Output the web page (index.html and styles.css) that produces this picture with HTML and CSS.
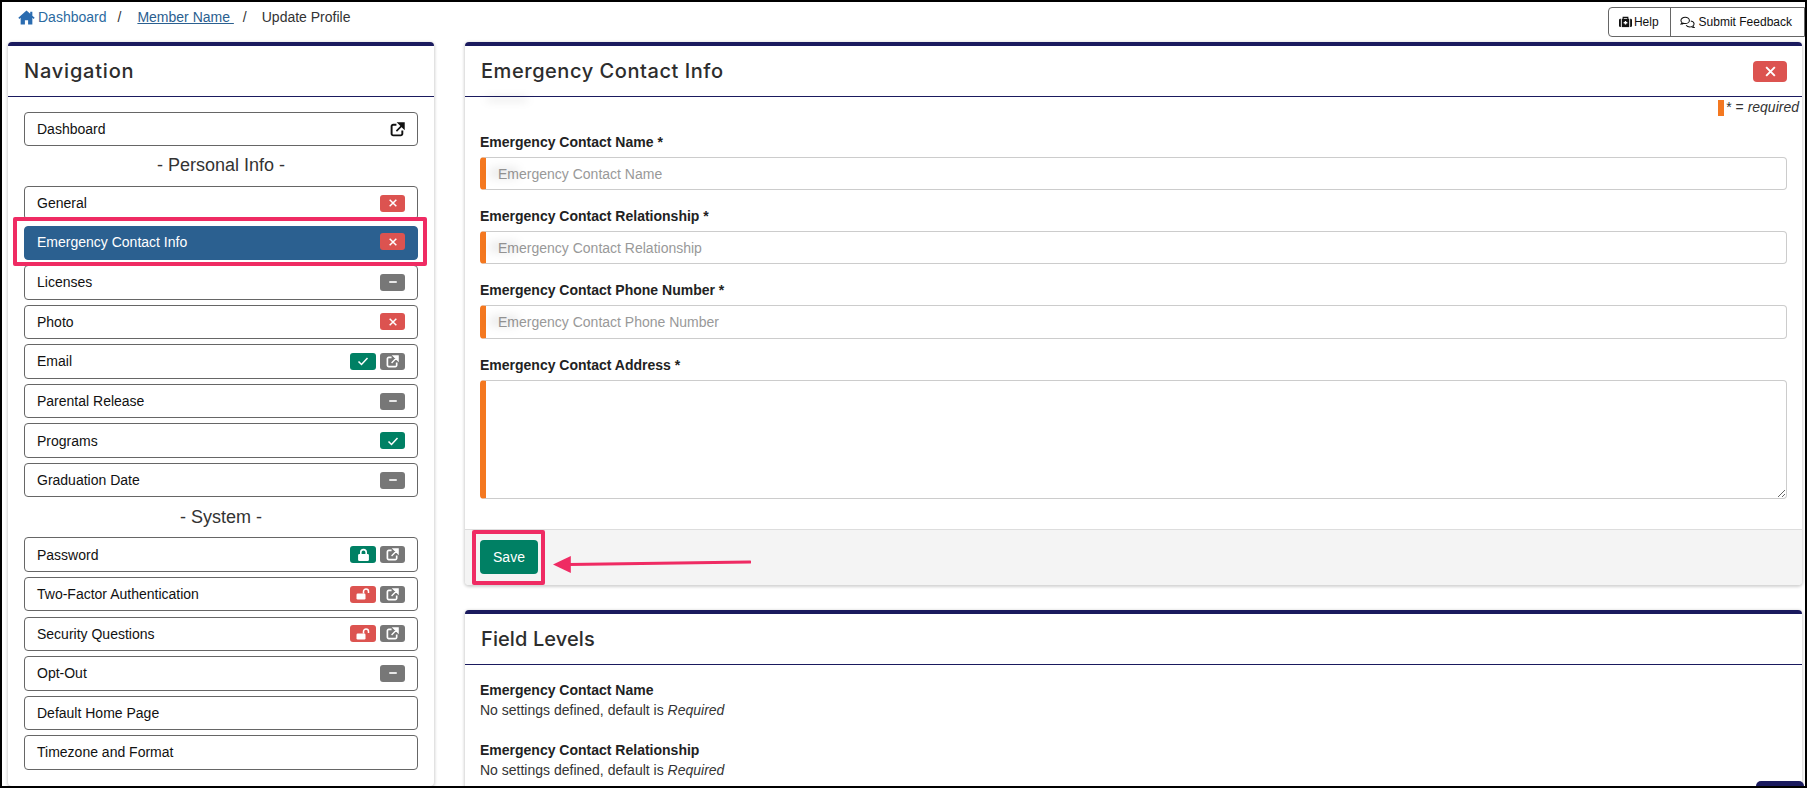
FILE: index.html
```html
<!DOCTYPE html>
<html lang="en">
<head>
<meta charset="utf-8">
<title>Update Profile</title>
<link rel="stylesheet" href="styles.css">
</head>
<body>
<svg class="defs" width="0" height="0" aria-hidden="true">
  <symbol id="i-x" viewBox="0 0 12 12"><path d="M2 2l8 8M10 2l-8 8" fill="none" stroke="currentColor" stroke-width="1.8"/></symbol>
  <symbol id="i-minus" viewBox="0 0 12 12"><path d="M1.5 6h9" fill="none" stroke="currentColor" stroke-width="2"/></symbol>
  <symbol id="i-check" viewBox="0 0 12 12"><path d="M1.5 6.500l3 3 6-6.500" fill="none" stroke="currentColor" stroke-width="1.5"/></symbol>
  <symbol id="i-ext" viewBox="0 0 14 14"><path d="M6 2.500H3A1.500 1.500 0 0 0 1.500 4v7A1.500 1.500 0 0 0 3 12.500h7A1.500 1.500 0 0 0 11.500 11V8" fill="none" stroke="currentColor" stroke-width="1.800"/><path d="M6 8.500L12 2.500M8 1h5v5z" fill="currentColor" stroke="currentColor" stroke-width="1.500"/></symbol>
  <symbol id="i-lock" viewBox="0 0 12 12"><path d="M3.500 5.500V4a2.500 2.500 0 0 1 5 0v1.500" fill="none" stroke="currentColor" stroke-width="1.500"/><rect x="1" y="5.500" width="10" height="6.500" rx="1.200" fill="currentColor"/></symbol>
  <symbol id="i-unlock" viewBox="0 0 14 12"><path d="M7.500 5.500V3.500a2.500 2.500 0 0 1 5 0V5" fill="none" stroke="currentColor" stroke-width="1.500"/><rect x="0.500" y="5.500" width="9" height="6" rx="1.200" fill="currentColor"/></symbol>
</svg>

<div class="frame">
  <header class="topbar">
    <nav class="crumbs">
      <svg class="home" viewBox="0 0 16 14" aria-hidden="true"><path d="M8 0.500L0.300 7.200l1 1.100L2.500 7.300V13.500h4v-4h3v4h4V7.300l1.200 1 1-1.100-2.200-1.900V1.500h-2v2z" fill="currentColor"/></svg>
      <a class="crumb-home" href="#">Dashboard</a>
      <span class="sep sep-a">/</span>
      <a class="crumb-member" href="#">Member Name&nbsp;</a>
      <span class="sep sep-b">/</span>
      <span class="crumb-current">Update Profile</span>
    </nav>
    <div class="btn-group">
      <a class="tool-btn tool-help" href="#">
        <svg class="tool-icon" viewBox="0 0 14 12" aria-hidden="true"><path d="M0 4a1.500 1.500 0 0 1 1.500-1.500H2v9h-.5A1.500 1.500 0 0 1 0 10zM14 4a1.500 1.500 0 0 0-1.500-1.500H12v9h.5A1.500 1.500 0 0 0 14 10z" fill="currentColor"/><path d="M4.500 3V1h5v2" fill="none" stroke="currentColor" stroke-width="1.200"/><rect x="3" y="2.500" width="8" height="9" fill="currentColor"/><path d="M7 4.800v4M5 6.800h4" stroke="#fff" stroke-width="1.500"/></svg>
        Help
      </a>
      <a class="tool-btn tool-feedback" href="#">
        <svg class="tool-icon tool-icon-wide" viewBox="0 0 16 13" aria-hidden="true"><path d="M5.500 1C3 1 1 2.500 1 4.300c0 .9.500 1.700 1.200 2.300-.1.600-.5 1.100-1 1.500 1 0 1.900-.3 2.500-.8.600.2 1.200.3 1.800.3 2.500 0 4.500-1.500 4.500-3.300S8 1 5.500 1z" fill="none" stroke="currentColor" stroke-width="1.100"/><path d="M11.500 4.800c2 .3 3.500 1.600 3.500 3.100 0 .9-.5 1.700-1.200 2.200.1.600.5 1.200 1 1.600-1 0-1.900-.3-2.500-.8-.6.200-1.200.3-1.800.3-1.700 0-3.200-.7-4-1.800" fill="none" stroke="currentColor" stroke-width="1.100"/></svg>
        Submit Feedback
      </a>
    </div>
  </header>

  <div class="layout">
    <aside class="card nav-card">
      <h2 class="card-title title-nav">Navigation</h2>
      <div class="nav-body">
        <a class="nav-item" href="#">Dashboard<span class="nav-badges"><svg class="ext-plain"><use href="#i-ext"/></svg></span></a>
        <h3 class="nav-heading">- Personal Info -</h3>
        <a class="nav-item" href="#">General<span class="nav-badges"><span class="badge red"><svg class="gl"><use href="#i-x"/></svg></span></span></a>
        <a class="nav-item active" href="#">Emergency Contact Info<span class="nav-badges"><span class="badge red"><svg class="gl"><use href="#i-x"/></svg></span></span></a>
        <a class="nav-item" href="#">Licenses<span class="nav-badges"><span class="badge grey"><svg class="gl"><use href="#i-minus"/></svg></span></span></a>
        <a class="nav-item" href="#">Photo<span class="nav-badges"><span class="badge red"><svg class="gl"><use href="#i-x"/></svg></span></span></a>
        <a class="nav-item" href="#">Email<span class="nav-badges"><span class="badge green wide"><svg class="gl gl-check"><use href="#i-check"/></svg></span><span class="badge grey"><svg class="gl gl-ext"><use href="#i-ext"/></svg></span></span></a>
        <a class="nav-item" href="#">Parental Release<span class="nav-badges"><span class="badge grey"><svg class="gl"><use href="#i-minus"/></svg></span></span></a>
        <a class="nav-item" href="#">Programs<span class="nav-badges"><span class="badge green"><svg class="gl gl-check"><use href="#i-check"/></svg></span></span></a>
        <a class="nav-item" href="#">Graduation Date<span class="nav-badges"><span class="badge grey"><svg class="gl"><use href="#i-minus"/></svg></span></span></a>
        <h3 class="nav-heading nav-heading-sys">- System -</h3>
        <a class="nav-item" href="#">Password<span class="nav-badges"><span class="badge green wide"><svg class="gl gl-lock"><use href="#i-lock"/></svg></span><span class="badge grey"><svg class="gl gl-ext"><use href="#i-ext"/></svg></span></span></a>
        <a class="nav-item" href="#">Two-Factor Authentication<span class="nav-badges"><span class="badge red wide"><svg class="gl gl-unlock"><use href="#i-unlock"/></svg></span><span class="badge grey"><svg class="gl gl-ext"><use href="#i-ext"/></svg></span></span></a>
        <a class="nav-item" href="#">Security Questions<span class="nav-badges"><span class="badge red wide"><svg class="gl gl-unlock"><use href="#i-unlock"/></svg></span><span class="badge grey"><svg class="gl gl-ext"><use href="#i-ext"/></svg></span></span></a>
        <a class="nav-item" href="#">Opt-Out<span class="nav-badges"><span class="badge grey"><svg class="gl"><use href="#i-minus"/></svg></span></span></a>
        <a class="nav-item" href="#">Default Home Page</a>
        <a class="nav-item" href="#">Timezone and Format</a>
      </div>
      <div class="mark mark-nav"></div>
    </aside>

    <main class="main-col">
      <section class="card form-card">
        <div class="title-row">
          <h2 class="card-title title-form">Emergency Contact Info</h2>
          <button class="close-btn" type="button" aria-label="Close"><svg class="gl-close"><use href="#i-x"/></svg></button>
        </div>
        <div class="smudge smudge-head"></div>
        <p class="req-note"><span class="req-swatch"></span><span>* = <em>required</em></span></p>
        <form class="form-body">
          <label class="field-label">Emergency Contact Name *</label>
          <div class="input-wrap"><input class="input" placeholder="Emergency Contact Name"><span class="smudge smudge-input"></span></div>
          <label class="field-label">Emergency Contact Relationship *</label>
          <div class="input-wrap"><input class="input" placeholder="Emergency Contact Relationship"><span class="smudge smudge-input"></span></div>
          <label class="field-label">Emergency Contact Phone Number *</label>
          <div class="input-wrap"><input class="input" placeholder="Emergency Contact Phone Number"><span class="smudge smudge-input"></span></div>
          <label class="field-label">Emergency Contact Address *</label>
          <textarea class="input textarea"></textarea>
        </form>
        <footer class="card-footer">
          <button class="save-btn" type="button">Save</button>
          <div class="mark mark-save"></div>
          <svg class="arrow" viewBox="0 0 200 18" aria-hidden="true"><path d="M16 9.500L199 7" fill="none" stroke="#ef2b63" stroke-width="3" stroke-linecap="round"/><path d="M0 9.500L18 1v17z" fill="#ef2b63"/></svg>
        </footer>
      </section>

      <section class="card levels-card">
        <h2 class="card-title title-levels">Field Levels</h2>
        <div class="levels-body">
          <div class="level">
            <strong class="level-name">Emergency Contact Name</strong>
            <p class="level-text">No settings defined, default is <em>Required</em></p>
          </div>
          <div class="level">
            <strong class="level-name">Emergency Contact Relationship</strong>
            <p class="level-text">No settings defined, default is <em>Required</em></p>
          </div>
        </div>
      </section>
    </main>
  </div>
  <div class="chat-tab"></div>
</div>
</body>
</html>
```

FILE: styles.css
```css
* { box-sizing: border-box; }
html, body { margin: 0; padding: 0; height: 100%; }
body {
  width: 1807px;
  height: 788px;
  overflow: hidden;
  background: #fff;
  font-family: "Liberation Sans", Arial, sans-serif;
  font-size: 14px;
  color: #222;
}
.defs { position: absolute; }
.frame {
  position: relative;
  width: 1807px;
  height: 788px;
  border: 2px solid #000;
  overflow: hidden;
  background: #fff;
}

/* top bar */
.topbar {
  display: flex;
  justify-content: space-between;
  align-items: flex-start;
  height: 40px;
  padding: 5px 0 0 16px;
}
.crumbs { display: flex; align-items: center; height: 20px; color: #333; line-height: 20px; }
.home { width: 17px; height: 15px; color: #2b6cb0; margin-right: 3px; }
.crumb-home { color: #2b6a9f; text-decoration: none; }
.crumb-member { color: #2b6090; text-decoration: underline; }
.sep-a { margin: 0 16px 0 11px; }
.sep-b { margin: 0 15px 0 9px; }
.crumb-current { color: #333; }
.btn-group {
  display: flex;
  height: 30px;
  border: 1px solid #666;
  border-radius: 4px 0 0 4px;
}
.tool-btn {
  display: flex;
  align-items: center;
  font-size: 12px;
  color: #111;
  text-decoration: none;
}
.tool-help { gap: 2px; padding: 0 11px 0 10px; }
.tool-feedback { gap: 4px; padding: 0 12px 0 9px; border-left: 1px solid #666; }
.tool-icon { width: 13px; height: 12px; }
.tool-icon-wide { width: 15px; height: 13px; }

/* layout */
.layout { display: flex; align-items: flex-start; padding-left: 6px; }
.card {
  background: #fff;
  border-top: 4px solid #1a1a5e;
  border-radius: 4px;
  box-shadow: 0 1px 3px 1px rgba(0,0,0,.18);
}
.nav-card { position: relative; width: 426px; height: 744px; flex: none; }
.card-title {
  margin: 0;
  height: 51px;
  padding: 0 16px;
  display: flex;
  align-items: center;
  font-family: "Inter", "Noto Sans", sans-serif;
  font-weight: 500;
  font-size: 20px;
  color: #2d2d2d;
  border-bottom: 1px solid #1a1a5e;
}
.title-nav { letter-spacing: 0.8px; }
.title-form { letter-spacing: 0.55px; }
.title-levels { letter-spacing: 0.1px; }
.nav-body { display: flex; flex-direction: column; padding: 15px 16px 0; }
.nav-item {
  display: flex;
  justify-content: space-between;
  align-items: center;
  height: 34.4px;
  margin-bottom: 5.2px;
  padding: 0 12px;
  flex: none;
  border: 1px solid #666;
  border-radius: 4px;
  color: #111;
  text-decoration: none;
  font-size: 14px;
}
.nav-item.active { padding-bottom: 2px; background: #2b6090; border-color: #2b6090; color: #fff; }
.nav-heading {
  margin: -0.2px 0 5.2px;
  height: 29.4px;
  font-weight: 400;
  font-size: 18px;
  line-height: 29px;
  text-align: center;
  color: #333;
}
.nav-heading-sys { height: 29.6px; margin-top: 0; }
.nav-badges { display: flex; gap: 4px; align-items: center; }
.badge {
  display: flex;
  align-items: center;
  justify-content: center;
  width: 25px;
  height: 17px;
  border-radius: 3px;
  color: #fff;
}
.badge.wide { width: 26px; }
.badge.red { background: #dc5350; }
.badge.grey { background: #777; }
.badge.green { background: #008064; }
.gl { width: 10px; height: 10px; }
.gl-check { width: 12px; height: 12px; }
.gl-lock { width: 13px; height: 13px; }
.gl-ext { width: 13px; height: 13px; }
.gl-unlock { width: 14px; height: 12px; }
.ext-plain { width: 15px; height: 15px; color: #111; }

/* overlay marks */
.mark { position: absolute; border: 4px solid #ef2b63; border-radius: 2px; pointer-events: none; }
.mark-nav { left: 5px; top: 171px; width: 414px; height: 49px; }
.mark-save { left: 7px; top: 0; width: 73px; height: 55px; }

/* main */
.main-col { margin-left: 31px; width: 1337px; flex: none; display: flex; flex-direction: column; gap: 25px; }
.form-card { position: relative; }
.title-row { position: relative; }
.close-btn {
  position: absolute;
  right: 15px;
  top: 15px;
  display: flex;
  align-items: center;
  justify-content: center;
  width: 34px;
  height: 21px;
  padding: 0;
  border: 0;
  border-radius: 4px;
  background: #dc5350;
  color: #fff;
}
.gl-close { width: 13px; height: 13px; }
.smudge { position: absolute; background: rgba(0,0,0,.1); filter: blur(4px); }
.smudge-head { left: 22px; top: 51px; width: 40px; height: 4px; }
.req-note {
  display: flex;
  justify-content: flex-end;
  align-items: center;
  height: 17px;
  margin: 2px 3px 0 0;
  font-size: 14px;
  line-height: 17px;
  color: #333;
}
.req-swatch { width: 6px; height: 16px; background: #f47820; margin-right: 2px; }
.form-body { display: flex; flex-direction: column; padding: 17px 15px 0 15px; height: 413px; }
.field-label { display: block; height: 18px; font-weight: 700; font-size: 14px; line-height: 18px; margin-bottom: 6px; color: #222; }
.input-wrap { position: relative; margin-bottom: 17px; }
.input {
  display: block;
  width: 100%;
  height: 33.2px;
  padding: 0 12px;
  border: 1px solid #ccc;
  border-left: 6px solid #f47820;
  border-radius: 4px;
  font-family: "Liberation Sans", Arial, sans-serif;
  font-size: 14px;
  background: #fff;
  outline: none;
}
.input::placeholder { color: #999; opacity: 1; }
.smudge-input { left: 10px; top: 10px; width: 28px; height: 12px; background: rgba(0,0,0,.07); }
.textarea { height: 119px; resize: vertical; }
.card-footer {
  position: relative;
  height: 56px;
  padding: 10px 15px;
  background: #f4f4f4;
  border-top: 1px solid #ddd;
  border-radius: 0 0 4px 4px;
}
.save-btn {
  display: block;
  width: 58px;
  height: 34px;
  padding: 0;
  border: 0;
  border-radius: 4px;
  background: #008064;
  color: #fff;
  font-family: "Liberation Sans", Arial, sans-serif;
  font-size: 14px;
}
.arrow { position: absolute; left: 88px; top: 25px; width: 198px; height: 18px; }
.levels-body { padding: 16px 15px 0; }
.level { margin-bottom: 21px; }
.level-name { display: block; height: 18px; line-height: 18px; margin-bottom: 1px; color: #222; }
.level-text { margin: 0; height: 20px; line-height: 20px; color: #333; }
.chat-tab {
  position: absolute;
  right: 1px;
  bottom: 0;
  width: 48px;
  height: 5px;
  background: #1a1a5e;
  border-radius: 12px 12px 0 0;
}
```
